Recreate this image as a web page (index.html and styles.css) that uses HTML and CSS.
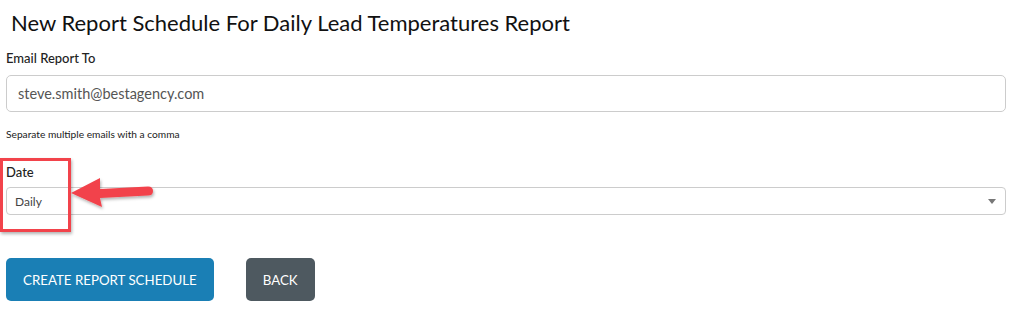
FILE: index.html
```html
<!DOCTYPE html>
<html lang="en">
<head>
    <meta charset="UTF-8">
    <title>New Report Schedule</title>
    <link rel="stylesheet" href="styles.css">
</head>
<body>
    <div class="page">
        <h1 class="page-title">New Report Schedule For Daily Lead Temperatures Report</h1>

        <div class="field">
            <label class="field-label" for="email">Email Report To</label>
            <input id="email" class="text-input" type="text" value="steve.smith@bestagency.com">
            <div class="help-text">Separate multiple emails with a comma</div>
        </div>

        <div class="field field-date">
            <label class="field-label" for="date">Date</label>
            <div class="select-box">
                <span class="select-value">Daily</span>
                <span class="select-caret"></span>
            </div>

            <!-- annotation -->
            <div class="callout-box"></div>
            <svg class="callout-arrow" width="100" height="40" viewBox="0 0 100 40">
                <defs>
                    <filter id="arrow-shadow" x="-20%" y="-30%" width="140%" height="170%">
                        <feDropShadow dx="1" dy="2" stdDeviation="1.5" flood-color="#000" flood-opacity="0.3"/>
                    </filter>
                </defs>
                <g filter="url(#arrow-shadow)" fill="#f2434b">
                    <path d="M2 20 L31 5 L31 16 L79 13.5 Q84 13.5 84 18 Q84 22.5 79 22.5 L31 25 L33 34 Z"/>
                </g>
            </svg>
        </div>

        <div class="actions">
            <button class="btn btn-primary">Create Report Schedule</button>
            <button class="btn btn-dark">Back</button>
        </div>
    </div>
</body>
</html>
```

FILE: styles.css
```css
body {
    margin: 0;
    background: #fff;
    font-family: Lato, "Open Sans", sans-serif;
    color: #222;
}

.page {
    padding: 0 6px;
}

.page-title {
    font-size: 22px;
    font-weight: normal;
    color: #111;
    margin: 0;
    padding: 9px 0 0 5px;
    line-height: 28px;
}

.field {
    margin-top: 13px;
}

.field-label {
    display: block;
    font-size: 13px;
    font-weight: 500;
    line-height: 16px;
    margin-bottom: 9px;
}

.text-input {
    display: block;
    box-sizing: border-box;
    width: 100%;
    height: 37px;
    margin: 0;
    padding: 0 11px;
    border: 1px solid #ccc;
    border-radius: 5px;
    font-family: inherit;
    font-size: 14.5px;
    color: #555;
    outline: none;
}

.help-text {
    font-size: 10.2px;
    color: #222;
    margin-top: 15px;
    line-height: 14px;
}

.field-date {
    position: relative;
    margin-top: 23px;
}

.field-date .field-label {
    margin-bottom: 7px;
}

.select-box {
    box-sizing: border-box;
    height: 28px;
    border: 1px solid #ccc;
    border-radius: 4px;
    display: flex;
    align-items: center;
    justify-content: space-between;
    padding: 0 9px 0 8px;
}

.select-value {
    font-size: 12px;
    color: #444;
}

.select-caret {
    width: 0;
    height: 0;
    border-left: 4px solid transparent;
    border-right: 4px solid transparent;
    border-top: 5px solid #777;
}

.callout-box {
    position: absolute;
    left: -6px;
    top: -6px;
    width: 65px;
    height: 68px;
    border: 3px solid #f2434b;
    box-shadow: 1px 2px 3px rgba(0, 0, 0, 0.3);
}

.callout-arrow {
    position: absolute;
    left: 63px;
    top: 9px;
}

.actions {
    display: flex;
    gap: 32px;
    margin-top: 43px;
}

.btn {
    height: 43px;
    border: none;
    border-radius: 5px;
    color: #fff;
    font-family: inherit;
    font-size: 13.3px;
    font-weight: normal;
    text-transform: uppercase;
    padding: 0 17px;
    cursor: pointer;
}

.btn-primary {
    background-color: #1a7fb5;
}

.btn-dark {
    background-color: #4e5960;
}
```
